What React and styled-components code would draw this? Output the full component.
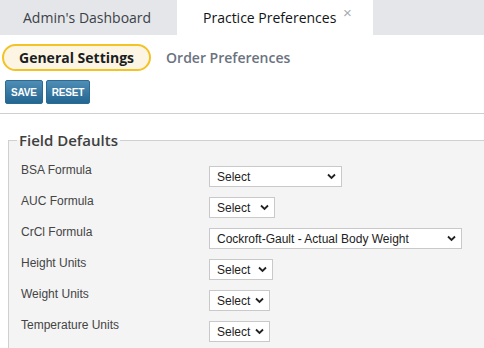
import React from "react";
import styled, { createGlobalStyle } from "styled-components";

const GlobalStyle = createGlobalStyle`
  html, body {
    margin: 0;
    padding: 0;
    background: #ffffff;
  }
  body {
    font-family: "Liberation Sans", Arial, sans-serif;
    overflow: hidden;
  }
`;

const Page = styled.div`
  width: 484px;
  height: 348px;
  overflow: hidden;
`;

const TabBar = styled.div`
  display: flex;
  height: 35px;
  background: #e4e6e9;
`;

const Tab = styled.div`
  position: relative;
  display: flex;
  align-items: center;
  box-sizing: border-box;
  width: ${(p) => p.width}px;
  padding-left: ${(p) => p.pad}px;
  font-family: "Open Sans", sans-serif;
  font-size: 14px;
  color: ${(p) => (p.active ? "#111418" : "#3c4148")};
  background: ${(p) => (p.active ? "#ffffff" : "transparent")};
`;

const Close = styled.span`
  position: absolute;
  left: 166px;
  top: 4px;
  font-size: 15px;
  color: #a9adb3;
  font-family: "Liberation Sans", sans-serif;
`;

const SubTabs = styled.div`
  display: flex;
  align-items: center;
  gap: 15px;
  margin: 9px 0 0 2px;
`;

const Pill = styled.div`
  box-sizing: border-box;
  height: 27px;
  padding: 0 15px;
  display: flex;
  align-items: center;
  border: 2px solid #f3c325;
  border-radius: 14px;
  background: #fcf5e3;
  font-family: "Open Sans", sans-serif;
  font-weight: 700;
  font-size: 14px;
  color: #1a1d22;
`;

const SubTab = styled.div`
  font-family: "Open Sans", sans-serif;
  font-weight: 600;
  font-size: 14px;
  color: #6b7280;
`;

const Actions = styled.div`
  display: flex;
  gap: 3px;
  margin: 9px 0 0 5px;
`;

const ActionButton = styled.button`
  height: 24px;
  padding: 0 5px;
  border: 1px solid #2a6b93;
  border-radius: 2px;
  background: linear-gradient(#4f8db5, #236691);
  color: #ffffff;
  font-family: "Liberation Sans", Arial, sans-serif;
  font-weight: 700;
  font-size: 10px;
  letter-spacing: -0.2px;
  cursor: pointer;
`;

const Divider = styled.hr`
  margin: 9px 0 0 0;
  border: none;
  border-top: 1px solid #cfcfcf;
`;

const Fieldset = styled.fieldset`
  margin: 16px -20px 0 8px;
  padding: 12px 0 0 12px;
  border: 1px solid #d0d0d0;
  border-right: none;
  background: #f4f4f4;
  height: 240px;
`;

const Legend = styled.legend`
  padding: 0 2px;
  margin-left: -4px;
  font-family: "Open Sans", sans-serif;
  font-weight: 600;
  font-size: 15px;
  color: #3f3f3f;
`;

const Row = styled.div`
  display: grid;
  grid-template-columns: 188px auto;
  align-items: start;
  height: 31px;
`;

const Label = styled.div`
  font-size: 12px;
  color: #444444;
  padding-top: 1px;
`;

const SelectWrap = styled.div`
  position: relative;
  width: ${(p) => p.width}px;
  margin-top: 4px;
`;

const Select = styled.select`
  appearance: none;
  box-sizing: border-box;
  width: 100%;
  height: 21px;
  padding: 0 0 0 7px;
  border: 1px solid #c9c9c9;
  border-radius: 0;
  background: #ffffff;
  font-family: "Liberation Sans", Arial, sans-serif;
  font-size: 12px;
  color: #222222;
  outline: none;
`;

const Chevron = styled.svg`
  position: absolute;
  right: 6px;
  top: 7px;
  pointer-events: none;
`;

const fields = [
  { label: "BSA Formula", value: "Select", width: 133 },
  { label: "AUC Formula", value: "Select", width: 66 },
  { label: "CrCl Formula", value: "Cockroft-Gault - Actual Body Weight", width: 253 },
  { label: "Height Units", value: "Select", width: 64 },
  { label: "Weight Units", value: "Select", width: 61 },
  { label: "Temperature Units", value: "Select", width: 61 },
];

const App = () => {
  return (
    <Page>
      <GlobalStyle />
      <TabBar>
        <Tab width={177} pad={23}>
          Admin's Dashboard
        </Tab>
        <Tab active width={196} pad={26}>
          Practice Preferences
          <Close>×</Close>
        </Tab>
      </TabBar>

      <SubTabs>
        <Pill>General Settings</Pill>
        <SubTab>Order Preferences</SubTab>
      </SubTabs>

      <Actions>
        <ActionButton>SAVE</ActionButton>
        <ActionButton>RESET</ActionButton>
      </Actions>

      <Divider />

      <Fieldset>
        <Legend>Field Defaults</Legend>
        {fields.map((field) => (
          <Row key={field.label}>
            <Label>{field.label}</Label>
            <SelectWrap width={field.width}>
              <Select defaultValue={field.value}>
                <option>{field.value}</option>
              </Select>
              <Chevron width="9" height="7" viewBox="0 0 9 7">
                <path d="M1 1.5 L4.5 5 L8 1.5" fill="none" stroke="#222" strokeWidth="1.8" />
              </Chevron>
            </SelectWrap>
          </Row>
        ))}
      </Fieldset>
    </Page>
  );
};

export default App;
